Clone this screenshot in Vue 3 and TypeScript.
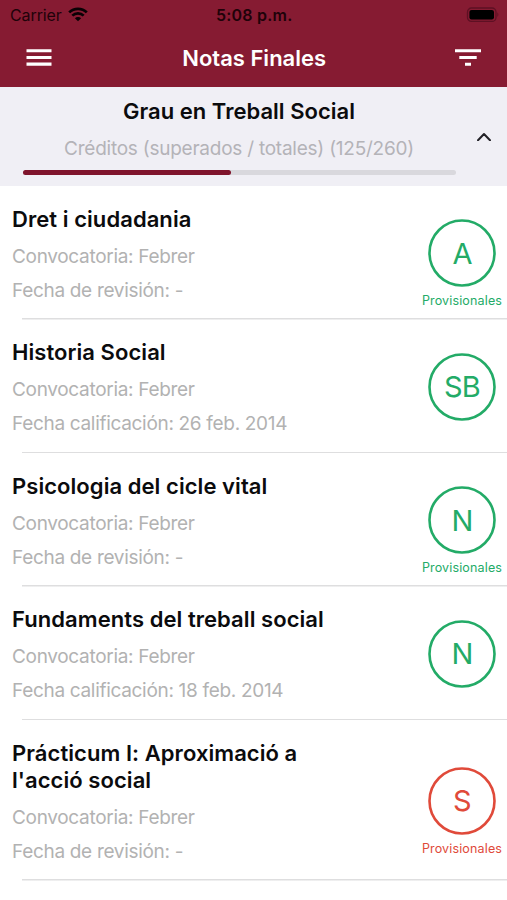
<script setup lang="ts">
interface Grade {
  id: string
  title: string[]
  call: string
  date: string
  mark: string
  provisional: boolean
  failed?: boolean
}

const passed = 125
const total = 260
const progress = `${(passed / total) * 100}%`

const grades: Grade[] = [
  { id: 'dret', title: ['Dret i ciudadania'], call: 'Convocatoria: Febrer', date: 'Fecha de revisión: -', mark: 'A', provisional: true },
  { id: 'historia', title: ['Historia Social'], call: 'Convocatoria: Febrer', date: 'Fecha calificación: 26 feb. 2014', mark: 'SB', provisional: false },
  { id: 'psicologia', title: ['Psicologia del cicle vital'], call: 'Convocatoria: Febrer', date: 'Fecha de revisión: -', mark: 'N', provisional: true },
  { id: 'fundaments', title: ['Fundaments del treball social'], call: 'Convocatoria: Febrer', date: 'Fecha calificación: 18 feb. 2014', mark: 'N', provisional: false },
  { id: 'practicum', title: ['Prácticum I: Aproximació a', "l'acció social"], call: 'Convocatoria: Febrer', date: 'Fecha de revisión: -', mark: 'S', provisional: true, failed: true },
]
</script>

<template>
  <main class="screen">
    <header class="top">
      <div class="status">
        <div class="carrier">
          <span class="carrier-name">Carrier</span>
          <svg class="wifi" viewBox="0 0 20 15" width="20" height="15">
            <path d="M1.2 5.4a12.6 12.6 0 0 1 17.6 0" />
            <path d="M4.3 8.6a8.2 8.2 0 0 1 11.4 0" />
            <path class="dot" d="M10 14.3 6.9 11.2a4.4 4.4 0 0 1 6.2 0z" />
          </svg>
        </div>
        <span class="time">5:08 p.m.</span>
        <svg class="battery" viewBox="0 0 34 16" width="34" height="16">
          <rect class="shell" x="1.5" y="1" width="28.5" height="13.4" rx="4" />
          <rect x="3.4" y="2.9" width="24.6" height="9.6" rx="2.2" />
          <path class="cap" d="M31.4 5.3q2 2.4 0 4.8z" />
        </svg>
      </div>
      <nav class="bar">
        <svg viewBox="0 0 26 19" width="26" height="19">
          <path d="M.5 1.7h25M.5 8.5h25M.5 15.1h25" />
        </svg>
        <h1>Notas Finales</h1>
        <svg viewBox="0 0 26 19" width="26" height="19">
          <path d="M0 1.7h26M4.3 8.5h17.4M10 15.3h6" />
        </svg>
      </nav>
    </header>

    <section class="degree">
      <div class="degree-body">
        <h2>Grau en Treball Social</h2>
        <p class="credits">Créditos (superados / totales) ({{ passed }}/{{ total }})</p>
        <div class="track"><div class="fill" :style="{ width: progress }"></div></div>
      </div>
      <svg class="chevron" viewBox="0 0 14 9" width="14" height="9">
        <path d="M1 8.2 7 2l6 6.2" />
      </svg>
    </section>

    <ul class="list">
      <li v-for="g in grades" :key="g.id" class="row">
        <div class="info">
          <h3><span v-for="line in g.title" :key="line">{{ line }}</span></h3>
          <p>{{ g.call }}</p>
          <p>{{ g.date }}</p>
        </div>
        <div class="result" :class="{ failed: g.failed }">
          <svg class="ring" viewBox="0 0 68 68" width="68" height="68">
            <circle cx="34" cy="34" r="32.5" />
          </svg>
          <div class="mark">{{ g.mark }}</div>
          <span v-if="g.provisional" class="note">Provisionales</span>
        </div>
      </li>
    </ul>
  </main>
</template>

<style>
body {
  background: #fff;
}
</style>

<style scoped>
.screen {
  width: 507px;
  height: 900px;
  overflow: hidden;
  background: #fff;
  color: #0b0b0d;
  font-family: Inter, "Liberation Sans", sans-serif;
}
h1, h2, h3, p, ul {
  margin: 0;
  padding: 0;
}
.top {
  height: 87px;
  background: #861b32;
}
.status {
  display: grid;
  grid-template-columns: 1fr auto 1fr;
  align-items: center;
  height: 29px;
  padding: 0 7px 0 10px;
  font-size: 16px;
  color: #1f0209;
}
.carrier {
  display: flex;
  align-items: center;
  gap: 6.5px;
}
.carrier-name {
  letter-spacing: -0.1px;
}
.wifi {
  fill: none;
  stroke: #090104;
  stroke-width: 2.7;
}
.wifi .dot {
  fill: #090104;
  stroke: none;
}
.time {
  font-weight: 600;
  letter-spacing: 0.2px;
  padding-right: 1.5px;
}
.battery {
  justify-self: end;
}
.battery .shell {
  fill: none;
  stroke: #5e1023;
  stroke-width: 1.3;
}
.battery .cap {
  fill: #5e1023;
}
.bar {
  display: flex;
  align-items: center;
  justify-content: space-between;
  height: 58px;
  padding: 0 25.5px 0 26px;
}
.bar svg {
  stroke: #fff;
  stroke-width: 3.1;
}
.bar h1 {
  color: #fff;
  font-size: 22px;
  font-weight: 600;
  padding-left: 0.8px;
}
.degree {
  display: flex;
  align-items: center;
  height: 99px;
  padding: 0 16px 0 22.5px;
  box-sizing: border-box;
  background: #f0eff5;
}
.degree-body {
  width: 433px;
  height: 99px;
  display: flex;
  flex-direction: column;
  align-items: center;
  padding-top: 11px;
  box-sizing: border-box;
  white-space: nowrap;
}
.degree h2 {
  font-size: 22px;
  line-height: 27px;
  font-weight: 600;
  letter-spacing: 0.02px;
}
.credits {
  margin-top: 12px;
  font-size: 19px;
  line-height: 23px;
  letter-spacing: -0.24px;
  color: #b4b3b8;
}
.track {
  width: 100%;
  height: 5.5px;
  margin-top: 9.5px;
  border-radius: 3px;
  background: #d9d8dd;
}
.fill {
  height: 100%;
  border-radius: 3px;
  background: #7f142c;
}
.chevron {
  margin-left: auto;
  fill: none;
  stroke: #222126;
  stroke-width: 2;
  stroke-linejoin: round;
  stroke-linecap: round;
}
.list {
  padding-top: 0.5px;
  list-style: none;
}
.row {
  display: flex;
  justify-content: space-between;
  padding: 19.5px 4px 18px 12px;
  background: linear-gradient(#dededf, #dededf) 22px 100% / 100% 1.5px no-repeat;
}
.info {
  display: flex;
  flex-direction: column;
  gap: 11px;
  white-space: nowrap;
}
.info h3 {
  margin-bottom: 0.7px;
  font-size: 22px;
  line-height: 27px;
  font-weight: 600;
  letter-spacing: 0.06px;
}
.info h3 span {
  display: block;
}
.info p {
  font-size: 19px;
  line-height: 23px;
  letter-spacing: -0.31px;
  color: #b2b2b2;
}
.info p:last-child {
  margin-bottom: 0.3px;
}
.result {
  display: grid;
  grid-template: 1fr 68px 1fr / 82px;
  place-items: center;
  margin: -19.5px 0 -18px;
  color: #23ab67;
}
.result.failed {
  color: #e04a3a;
}
.ring,
.mark {
  grid-area: 2 / 1;
}
.ring {
  fill: none;
  stroke: currentColor;
  stroke-width: 2.6;
}
.mark {
  font-size: 29px;
  line-height: 34px;
  letter-spacing: -0.8px;
  padding-top: 1.2px;
}
.note {
  grid-area: 3 / 1;
  align-self: start;
  height: 0;
  padding-top: 6.2px;
  font-size: 12.5px;
  line-height: 15px;
  letter-spacing: 0.15px;
}
</style>
